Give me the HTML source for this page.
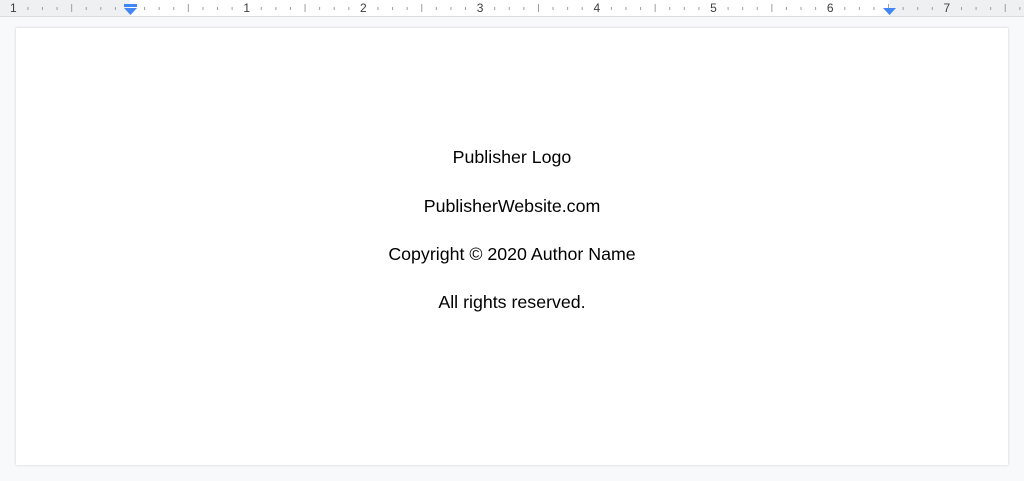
<!DOCTYPE html>
<html><head><style>
html,body{margin:0;padding:0;width:1024px;height:481px;overflow:hidden;background:#f8f9fa;font-family:"Liberation Sans",Arial,sans-serif;}
#ruler{position:absolute;left:0;top:0;width:1024px;height:16px;background:#eef0f2;border-bottom:1px solid #dadce0;}
#rw{position:absolute;left:130px;top:0;width:760px;height:16px;background:#fff;}
#page{position:absolute;left:16px;top:28px;width:992px;height:437px;background:#fff;box-shadow:0 0 2px rgba(60,64,67,.25);}
.t{position:absolute;left:0;width:992px;text-align:center;font-size:17.8px;color:#000;}
</style></head><body>
<div id="ruler"><div id="rw"></div>
<svg id="rs" width="1024" height="17" style="position:absolute;left:0;top:0"></svg></div>
<div id="page">
<div class="t" style="top:119px">Publisher Logo</div>
<div class="t" style="top:168px">PublisherWebsite.com</div>
<div class="t" style="top:216px">Copyright © 2020 Author Name</div>
<div class="t" style="top:264px">All rights reserved.</div>
</div>
<script>
var s='',u=116.7,o=130;
for(var i=-8;i<=64;i++){var x=o+i*u/8;if(x<0||x>1024)continue;
 if(i%8==0){var n=i/8;if(n!=0){s+='<text x="'+x+'" y="12" font-size="12" text-anchor="middle" fill="#3c4043" font-family="Liberation Sans">'+Math.abs(n)+'</text>';}}
 else if(i%4==0){s+='<rect x="'+(x-0.5)+'" y="4" width="1" height="8" fill="#9aa0a6"/>';}
 else{s+='<rect x="'+(x-0.5)+'" y="7" width="1" height="3" fill="#9aa0a6"/>';}}
s+='<rect x="124" y="4" width="13" height="3" fill="#4285f4"/><polygon points="124,8 137,8 130.5,15" fill="#4285f4"/>';
s+='<polygon points="883,8 896,8 889.5,15" fill="#4285f4"/>';
document.getElementById('rs').innerHTML=s;
</script>
</body></html>
